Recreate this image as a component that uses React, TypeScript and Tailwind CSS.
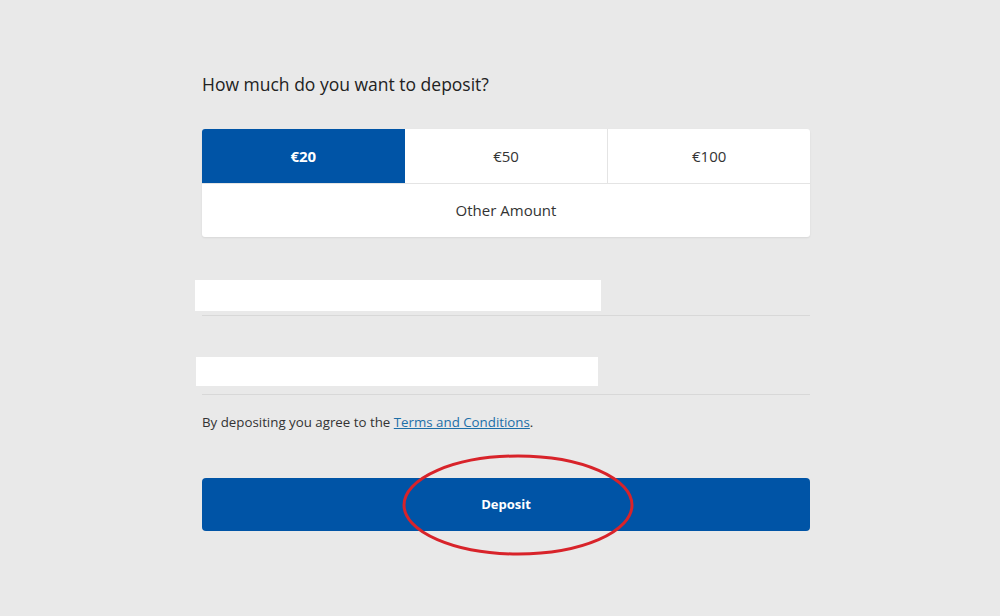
import React, { useState } from 'react';

const amounts = ['€20', '€50', '€100'];

export default function App() {
  const [selected, setSelected] = useState('€20');

  return (
    <div className="min-h-[616px] w-full bg-[#e9e9e9] font-['Open_Sans',sans-serif] text-[#222]">
      <div className="ml-[202px] w-[608px] pt-[72px]">
        <h1 className="text-[17.5px] leading-6 font-medium text-[#222]">How much do you want to deposit?</h1>

        <div className="mt-[33px] rounded-[3px] bg-white shadow-[0_1px_2px_rgba(0,0,0,0.08)] overflow-hidden">
          <div className="grid grid-cols-3 border-b border-[#e4e4e4]">
            {amounts.map((a, i) => (
              <button
                key={a}
                type="button"
                onClick={() => setSelected(a)}
                className={
                  selected === a
                    ? 'h-[54px] bg-[#0054a6] text-[15px] font-bold text-white'
                    : i > 0 && amounts[i - 1] !== selected
                      ? 'h-[54px] border-l border-[#e4e4e4] text-[15px] text-[#333]'
                      : 'h-[54px] text-[15px] text-[#333]'
                }
              >
                {a}
              </button>
            ))}
          </div>
          <button type="button" className="h-[53px] w-full text-[15px] text-[#333]">
            Other Amount
          </button>
        </div>

        {/* redacted fields */}
        <div className="mt-[43px]">
          <div className="ml-[-7px] h-[31px] w-[406px] bg-white" />
          <div className="mt-[4px] h-px w-full bg-[#d8d8d8]" />
        </div>
        <div className="mt-[41px]">
          <div className="ml-[-6px] h-[29px] w-[402px] bg-white" />
          <div className="mt-[8px] h-px w-full bg-[#d8d8d8]" />
        </div>

        <p className="mt-[17px] text-[13.3px] leading-5 text-[#333]">
          By depositing you agree to the{' '}
          <a href="#" className="text-[#1d6fa8] underline">
            Terms and Conditions
          </a>
          .
        </p>

        <div className="relative mt-[46px]">
          <button
            type="button"
            className="h-[53px] w-full rounded-[4px] bg-[#0054a6] text-[13px] font-bold text-white"
          >
            Deposit
          </button>
          <svg
            className="pointer-events-none absolute left-[199px] top-[-25px]"
            width="236"
            height="106"
            viewBox="0 0 236 106"
          >
            <ellipse cx="117" cy="52" rx="114" ry="49" fill="none" stroke="#d8232a" strokeWidth="3" />
          </svg>
        </div>
      </div>
    </div>
  );
}
